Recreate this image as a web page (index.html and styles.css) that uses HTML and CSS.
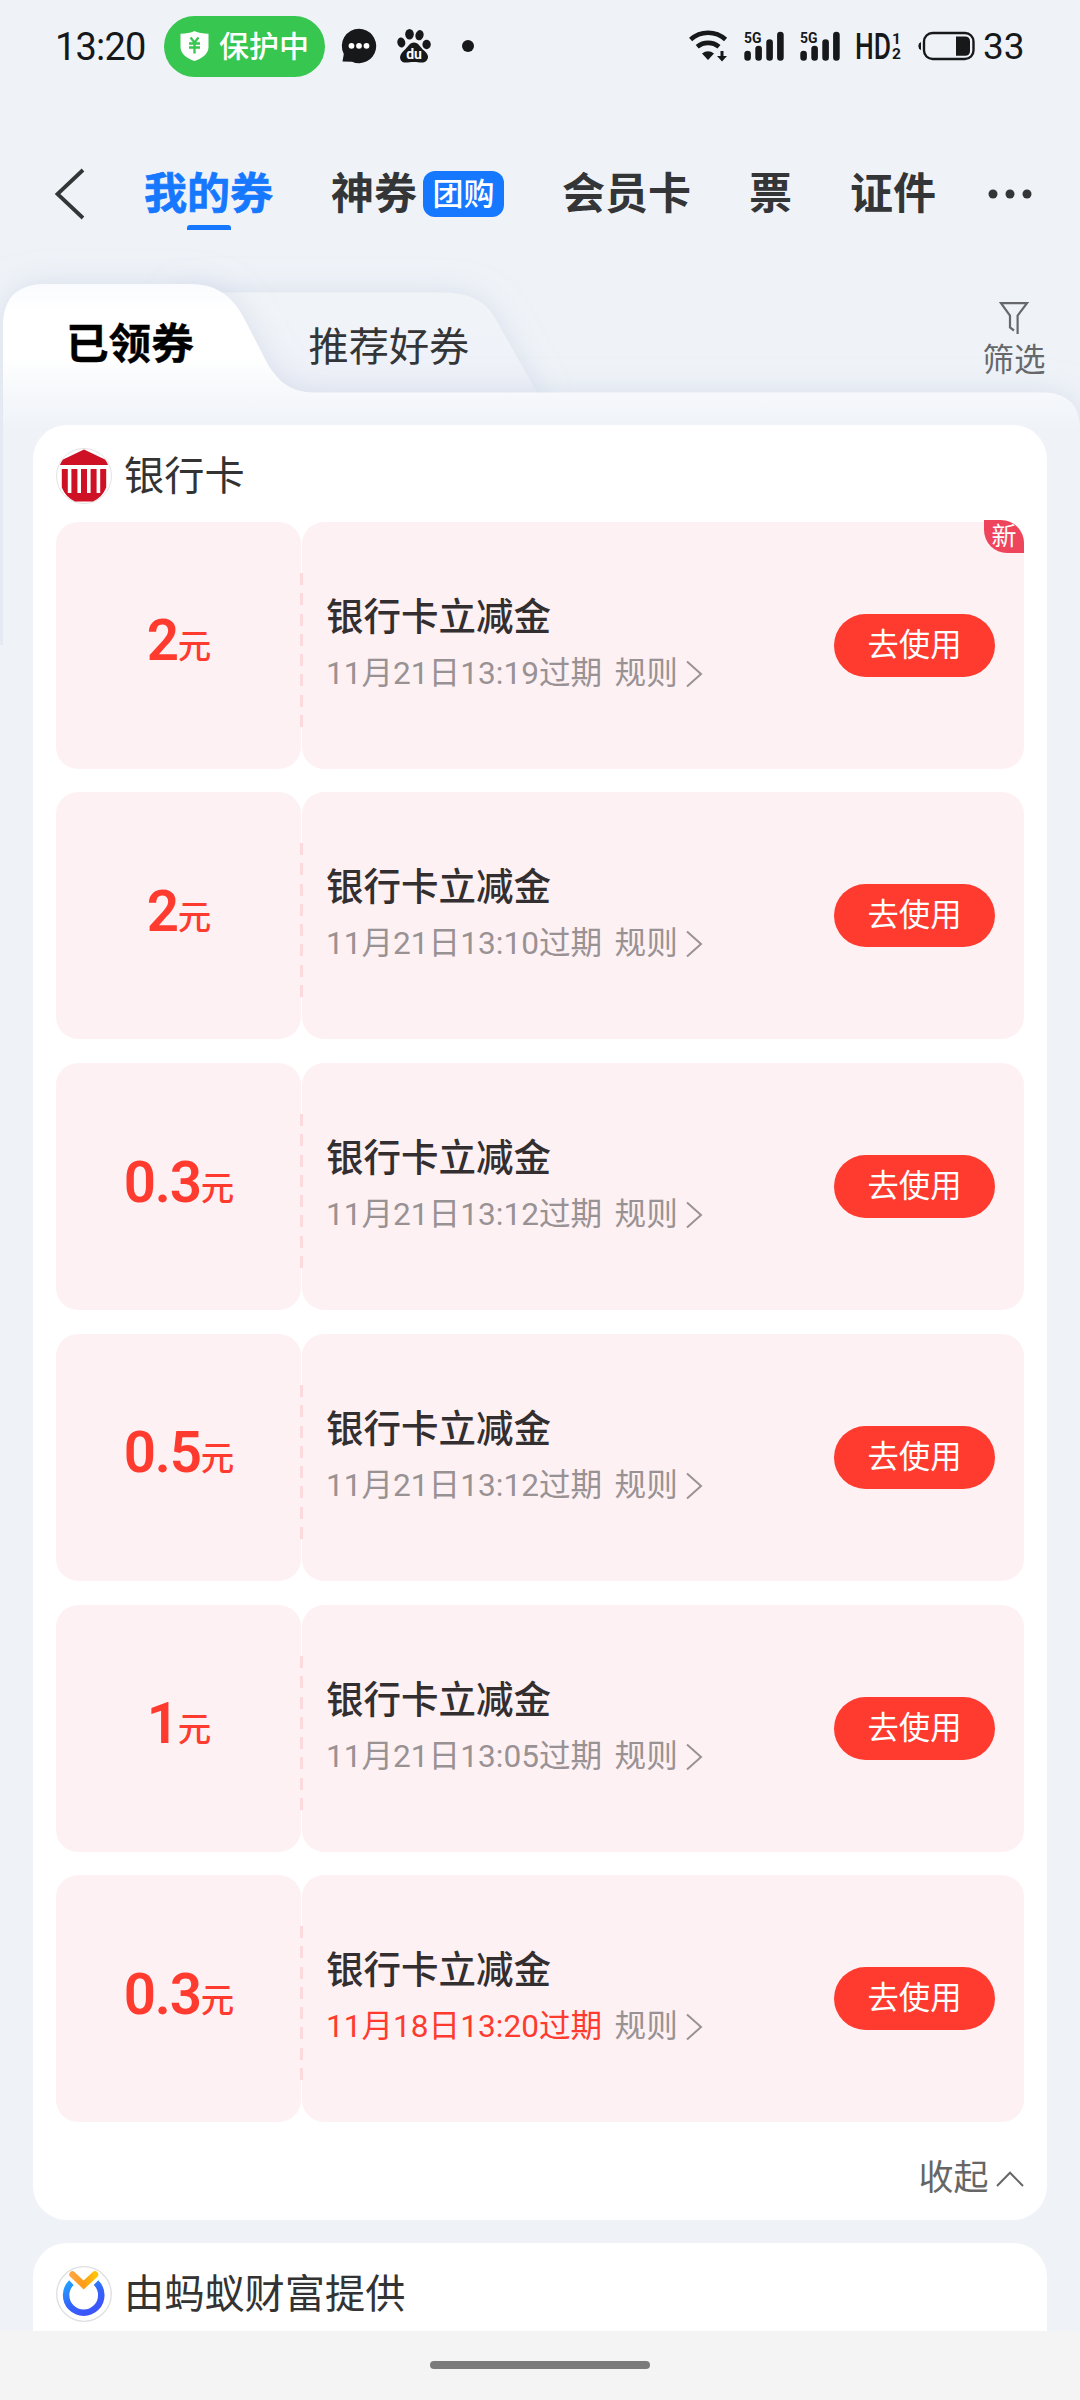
FILE: index.html
```html
<!DOCTYPE html>
<html lang="zh-CN">
<head>
<meta charset="utf-8">
<title>我的券</title>
<link rel="stylesheet" href="styles.css">
</head>
<body>
<header class="status">
  <span class="clock">13:20</span>
  <span class="guard">
    <svg width="29" height="30" viewBox="0 0 29 30"><path fill="#fff" d="M14.500 0C18 1.800 23 2.700 28.500 2.800V16C28.500 23 22 27.500 14.500 30C7 27.500.5 23 .5 16V2.800C6 2.700 11 1.800 14.500 0Z"/><path fill="none" stroke="#37c64f" stroke-width="2.300" d="M10.500 6.500L14.500 11.500L18.500 6.500M9 12.500H20M9 16.500H20M14.500 11.500V22.500"/></svg>
    <span>保护中</span>
  </span>
  <svg class="chat" width="36" height="36" viewBox="0 0 36 36"><path fill="#17181a" d="M18 .8A17.200 17.200 0 1 1 11 33.700L1.500 33.500L2.800 26A17.200 17.200 0 0 1 18 .8Z"/><g fill="#fff"><circle cx="10.500" cy="17.800" r="2.900"/><circle cx="18" cy="17.800" r="2.900"/><circle cx="25.500" cy="17.800" r="2.900"/></g></svg>
  <svg class="paw" width="34" height="34" viewBox="0 0 34 34"><g fill="#17181a"><ellipse cx="4.300" cy="13.500" rx="4" ry="5" transform="rotate(-12 4.300 13.500)"/><ellipse cx="12.500" cy="5.200" rx="4.300" ry="5.200"/><ellipse cx="22.500" cy="6.200" rx="4.100" ry="5.200" transform="rotate(15 22.500 6.200)"/><ellipse cx="29.600" cy="15.500" rx="4.200" ry="4.700"/><path d="M17 13.500C21.500 13.500 23 18 27 21.500C31 25 32 28 30 31C27.500 35 22.500 33 17 33C11.500 33 6.500 35 4 31.500C2 28 3.500 25 7 21.500C11 18 12.500 13.500 17 13.500Z"/></g><text class="paw-text" x="17" y="29.500" text-anchor="middle">du</text></svg>
  <i class="notice"></i>
  <span class="spring"></span>
  <svg class="wifi" width="40" height="32" viewBox="0 0 40 32"><g fill="none" stroke="#17181a" stroke-width="4.600"><path d="M2.600 9.500A26 26 0 0 1 37.600 9.500"/><path d="M9.200 16.800A17 17 0 0 1 31 16.800"/></g><path fill="#17181a" d="M14 23.500Q20 19 26 23.500L20 30Z"/><path fill="#17181a" d="M32.500 21h3v5h3.500L34 31.500L29 26H32.500Z"/></svg>
  <svg class="signal" width="40" height="31" viewBox="0 0 40 31"><text class="sig-text" x="0" y="11.500" textLength="17.500" lengthAdjust="spacingAndGlyphs">5G</text><g stroke="#17181a" stroke-width="6.600" stroke-linecap="round"><path d="M3.600 23V26.500M14.600 18V26.500M25.600 11.500V26.500M36.400 4V26.500"/></g></svg>
  <svg class="signal second" width="40" height="31" viewBox="0 0 40 31"><text class="sig-text" x="0" y="11.500" textLength="17.500" lengthAdjust="spacingAndGlyphs">5G</text><g stroke="#17181a" stroke-width="6.600" stroke-linecap="round"><path d="M3.600 23V26.500M14.600 18V26.500M25.600 11.500V26.500M36.400 4V26.500"/></g></svg>
  <svg class="hd" width="46" height="30" viewBox="0 0 46 30"><text class="hd-text" x="-1" y="28" textLength="36" lengthAdjust="spacingAndGlyphs">HD</text><text class="hd-num" x="36" y="12.500">1</text><text class="hd-num" x="36" y="28">2</text></svg>
  <svg class="battery" width="57" height="30" viewBox="0 0 57 30"><rect x="6" y="2" width="49.500" height="26" rx="8.500" fill="none" stroke="#17181a" stroke-width="2.400"/><path fill="#17181a" d="M3 11V19Q.3 18 .3 15Q.3 12 3 11ZM38 5.500H47Q52 5.500 52 10.500V20Q52 24.700 47 24.700H38Z"/></svg>
  <span class="percent">33</span>
</header>

<nav class="nav">
  <svg class="back" width="31" height="50" viewBox="0 0 31 50"><path fill="none" stroke="#333537" stroke-width="3.800" d="M28 1L2.500 25L28 49"/></svg>
  <span class="nav-item active">我的券</span>
  <span class="nav-item coupon-nav">神券</span><span class="group">团购</span>
  <span class="nav-item member">会员卡</span>
  <span class="nav-item ticket">票</span>
  <span class="nav-item docs">证件</span>
  <svg class="more" width="44" height="10" viewBox="0 0 44 10"><g fill="#333537"><circle cx="5" cy="5" r="4.500"/><circle cx="22" cy="5" r="4.500"/><circle cx="39" cy="5" r="4.500"/></g></svg>
</nav>

<main class="wallet">
  <svg class="backdrop" width="1080" height="406" viewBox="0 239 1080 406">
    <defs>
      <linearGradient id="panel" gradientUnits="userSpaceOnUse" x1="0" y1="284" x2="0" y2="430"><stop offset="0" stop-color="#fafbfe"/><stop offset=".2" stop-color="#fff"/><stop offset=".5" stop-color="#fff"/><stop offset=".75" stop-color="#f6f8fb"/><stop offset="1" stop-color="#eff3f8"/></linearGradient>
      <linearGradient id="tab" x1="0" y1="0" x2="0" y2="1"><stop offset="0" stop-color="#f1f4f7"/><stop offset=".45" stop-color="#eff2f8"/><stop offset="1" stop-color="#e9ecf6"/></linearGradient>
      <filter id="shade" filterUnits="userSpaceOnUse" x="-60" y="200" width="1200" height="700"><feDropShadow dx="0" dy="0" stdDeviation="15" flood-color="#c3cce0" flood-opacity=".52"/></filter>
    </defs>
    <path filter="url(#shade)" fill="url(#tab)" d="M180 292.500H440C468 292.500 485 300 495 318L538 394V430H180Z"/>
    <path filter="url(#shade)" fill="url(#panel)" d="M3 322Q5 284 45 284H190C219 284 234 298 246 322L262 353C273 376 286 392.500 314 392.500H1046Q1080 394 1080 430V800H3Z"/>
  </svg>
  <div class="tabs">
    <span class="tab-on">已领券</span>
    <span class="tab-off">推荐好券</span>
    <div class="filter">
      <svg width="32" height="34" viewBox="0 0 32 34"><path fill="none" stroke="#66686b" stroke-width="2.200" d="M19.600 33V14.500L29 2.200H3L12 14.500V26.500L16 29.500"/></svg>
      <span>筛选</span>
    </div>
  </div>

  <section class="card">
    <div class="card-head">
      <svg width="56" height="56" viewBox="0 0 56 56"><circle cx="28" cy="28" r="27.500" fill="#fff" stroke="#e3e3e3"/><path fill="#cf1126" d="M28 1.500L49 11.500Q51 14 52 17H4Q5 14 7 11.500ZM5.800 21H50.200V39.500A26 26 0 0 1 37 53.500H19A26 26 0 0 1 5.800 39.500Z"/><path stroke="#fff" stroke-width="3.600" d="M13.600 20V45M23.200 20V45M32.800 20V45M42.400 20V45"/></svg>
      <span>银行卡</span>
    </div>
    <div class="coupons">
      <article class="coupon"><div class="stub"><b>2</b><i>元</i></div><div class="body"><div class="info"><h3>银行卡立减金</h3><p><time>11月21日13:19过期</time><span>规则</span><svg width="16" height="28" viewBox="0 0 16 28"><path d="M1 1.500L15 14L1 26.500"/></svg></p></div><button>去使用</button></div><em class="new">新</em></article>
      <article class="coupon"><div class="stub"><b>2</b><i>元</i></div><div class="body"><div class="info"><h3>银行卡立减金</h3><p><time>11月21日13:10过期</time><span>规则</span><svg width="16" height="28" viewBox="0 0 16 28"><path d="M1 1.500L15 14L1 26.500"/></svg></p></div><button>去使用</button></div></article>
      <article class="coupon"><div class="stub"><b>0.3</b><i>元</i></div><div class="body"><div class="info"><h3>银行卡立减金</h3><p><time>11月21日13:12过期</time><span>规则</span><svg width="16" height="28" viewBox="0 0 16 28"><path d="M1 1.500L15 14L1 26.500"/></svg></p></div><button>去使用</button></div></article>
      <article class="coupon"><div class="stub"><b>0.5</b><i>元</i></div><div class="body"><div class="info"><h3>银行卡立减金</h3><p><time>11月21日13:12过期</time><span>规则</span><svg width="16" height="28" viewBox="0 0 16 28"><path d="M1 1.500L15 14L1 26.500"/></svg></p></div><button>去使用</button></div></article>
      <article class="coupon"><div class="stub"><b>1</b><i>元</i></div><div class="body"><div class="info"><h3>银行卡立减金</h3><p><time>11月21日13:05过期</time><span>规则</span><svg width="16" height="28" viewBox="0 0 16 28"><path d="M1 1.500L15 14L1 26.500"/></svg></p></div><button>去使用</button></div></article>
      <article class="coupon"><div class="stub"><b>0.3</b><i>元</i></div><div class="body"><div class="info"><h3>银行卡立减金</h3><p><time class="soon">11月18日13:20过期</time><span>规则</span><svg width="16" height="28" viewBox="0 0 16 28"><path d="M1 1.500L15 14L1 26.500"/></svg></p></div><button>去使用</button></div></article>
    </div>
    <div class="fold"><span>收起</span><svg width="28" height="16" viewBox="0 0 28 16"><path d="M1 15L14 1.800L27 15"/></svg></div>
  </section>

  <section class="card">
    <div class="card-head">
      <svg width="56" height="56" viewBox="0 0 56 56"><defs><linearGradient id="ring" x1="0" y1="0" x2=".6" y2="1"><stop offset="0" stop-color="#20a2ff"/><stop offset=".6" stop-color="#3464fb"/><stop offset="1" stop-color="#3c55fb"/></linearGradient><linearGradient id="vee" x1="0" y1="0" x2="1" y2="0"><stop offset="0" stop-color="#ffa53c"/><stop offset=".5" stop-color="#ff9b1a"/><stop offset="1" stop-color="#ffc408"/></linearGradient></defs><circle cx="28" cy="28" r="27.300" fill="#fff" stroke="#dedfe3" stroke-width="1.300"/><path fill="none" stroke="url(#ring)" stroke-width="6.500" d="M15.400 16.600A17.600 17.600 0 1 0 40 16.600"/><path fill="none" stroke="url(#vee)" stroke-width="6.500" stroke-linecap="round" stroke-linejoin="miter" d="M16.500 8.500L27.700 19L39 8.500"/></svg>
      <span>由蚂蚁财富提供</span>
    </div>
  </section>
</main>

<footer class="homebar"><i></i></footer>
</body>
</html>
```

FILE: styles.css
```css
* { box-sizing: border-box; }
body {
  margin: 0;
  width: 1080px;
  height: 2400px;
  overflow: hidden;
  display: flex;
  flex-direction: column;
  background: #eff3f8;
  color: #333537;
  font-family: Roboto, "Noto Sans CJK SC", sans-serif;
}
svg { display: block; flex: none; overflow: visible; }
i, em { font-style: normal; }
h3, p { margin: 0; }

.status {
  flex: none;
  display: flex;
  align-items: center;
  height: 92px;
  padding: 0 56px 0 55px;
  color: #17181a;
}
.clock { width: 109px; font-size: 38px; letter-spacing: -.8px; line-height: 56px; padding-top: 2px; }
.guard {
  display: flex;
  align-items: center;
  width: 161px;
  height: 61px;
  padding-left: 16px;
  border-radius: 31px;
  background: #37c64f;
  color: #fff;
  font-size: 30px;
  font-weight: 500;
}
.guard span { margin: 1px 0 0 10px; line-height: 40px; white-space: nowrap; }
.chat { margin-left: 16px; }
.paw { margin-left: 20px; }
.paw-text { fill: #fff; font: 700 14px Roboto, sans-serif; }
.notice { width: 12px; height: 12px; margin-left: 31px; border-radius: 50%; background: #17181a; }
.spring { flex: 1; }
.sig-text { font: 700 15.5px Roboto, sans-serif; fill: #17181a; }
.signal { margin-left: 16px; }
.signal.second { margin-left: 16px; }
.hd { margin-left: 16px; }
.hd-text { font: 500 37px Roboto, sans-serif; fill: #17181a; }
.hd-num { font: 700 15.5px Roboto, sans-serif; fill: #17181a; }
.battery { margin-left: 16px; }
.percent { margin-left: 8px; width: 41px; font-size: 37px; line-height: 50px; padding-top: 1px; }

.nav {
  flex: none;
  display: flex;
  align-items: center;
  height: 90px;
  margin: 57px 0 0;
  padding-left: 55px;
  font-size: 43px;
  font-weight: 700;
  line-height: 90px;
}
.nav-item { white-space: nowrap; }
.active { position: relative; margin-left: 58px; margin-right: .5px; color: #1677ff; -webkit-text-stroke: .7px #1677ff; }
.active::after {
  content: "";
  position: absolute;
  left: 43px;
  top: 76px;
  width: 44px;
  height: 5px;
  border-radius: 3px 3px 0 0;
  background: #1677ff;
}
.coupon-nav { margin-left: 57.5px; }
.group {
  width: 81px;
  height: 46px;
  margin-left: 6px;
  border-radius: 12px;
  background: #1677ff;
  color: #fff;
  font-size: 31px;
  font-weight: 500;
  line-height: 48px;
  text-align: center;
}
.member { margin-left: 58px; }
.ticket { margin-left: 58px; }
.docs { margin-left: 58px; }
.more { margin-left: 52px; }

.wallet { position: relative; flex: none; height: 2092px; overflow: hidden; }
.backdrop { position: absolute; left: 0; top: 0; overflow: hidden; }
.tabs {
  position: relative;
  display: flex;
  align-items: flex-start;
  height: 106px;
  margin-top: 47px;
  padding-left: 66px;
}
.tab-on { width: 242.5px; padding-top: 31px; font-size: 42.6px; font-weight: 700; line-height: 55px; color: #000; -webkit-text-stroke: .4px #000; }
.tab-off { padding-top: 34px; font-size: 40.2px; line-height: 56px; }
.filter {
  display: flex;
  flex-direction: column;
  align-items: center;
  width: 64px;
  margin: 15px 34px 0 auto;
  color: #66686b;
  font-size: 31.5px;
  line-height: 38px;
}
.filter span { margin-top: 7px; white-space: nowrap; }

.card {
  position: relative;
  margin: 33px 33px 0 33px;
  padding: 0 23px;
  border-radius: 34px;
  background: #fff;
}
.card + .card { margin-top: 23px; height: 160px; }
.card-head {
  display: flex;
  align-items: center;
  height: 96.5px;
  padding-top: 6px;
  font-size: 40.2px;
  color: #333;
}
.card-head span { margin: 1px 0 0 12px; line-height: 60px; }
.coupons { display: flex; flex-direction: column; gap: 23.8px; }
.coupon { position: relative; display: flex; gap: 1px; height: 247px; }
.coupon::after {
  content: "";
  position: absolute;
  left: 244px;
  top: 51px;
  width: 3px;
  height: 155px;
  background: repeating-linear-gradient(#fbd9dd 0 12px, #fef1f3 12px 20.3px);
}
.stub, .body { border-radius: 22px; background: #fef1f3; }
.stub {
  display: flex;
  justify-content: center;
  align-items: flex-start;
  width: 245px;
  padding: 86.5px 0 0 1px;
  color: #ff3b30;
}
.stub b { font-size: 56.5px; font-weight: 600; line-height: 67px; letter-spacing: -1.2px; }
.stub i { margin: 19px 0 0; font-size: 33.5px; font-weight: 500; line-height: 40px; }
.body { flex: 1; display: flex; align-items: center; justify-content: space-between; padding: 0 29px 0 24px; }
.info { padding-top: 2px; }
.info h3 { font-size: 37.5px; font-weight: 500; line-height: 55px; color: #332f30; }
.info p { display: flex; align-items: center; font-size: 31.6px; line-height: 58px; color: #999294; }
.info time { white-space: nowrap; }
.info span { margin-left: 12.5px; }
.info svg { margin: 0 0 0 8px; fill: none; stroke: #999294; stroke-width: 2; }
.info .soon { color: #ff3b30; }
button {
  width: 161px;
  height: 63px;
  padding: 0;
  border: 0;
  border-radius: 32px;
  background: #ff3b30;
  color: #fff;
  font: 31.3px/63px Roboto, "Noto Sans CJK SC", sans-serif;
}
.new {
  position: absolute;
  right: 0;
  top: -1.5px;
  width: 40px;
  height: 33px;
  border-radius: 0 23px 0 23px;
  background: #ee455c;
  color: #fff;
  font-size: 25px;
  line-height: 33px;
  text-align: center;
}
.fold {
  display: flex;
  justify-content: flex-end;
  align-items: center;
  height: 97.5px;
  padding-top: 15px;
  color: #666;
  font-size: 35px;
  line-height: 50px;
}
.fold span { padding-top: 1px; }
.fold svg { margin-left: 7.5px; fill: none; stroke: #666; stroke-width: 2; }

.homebar {
  flex: none;
  display: flex;
  justify-content: center;
  height: 69px;
  padding-top: 30px;
  background: #f4f4f4;
}
.homebar i { width: 220px; height: 8px; border-radius: 4px; background: #7b7b7b; }
```
